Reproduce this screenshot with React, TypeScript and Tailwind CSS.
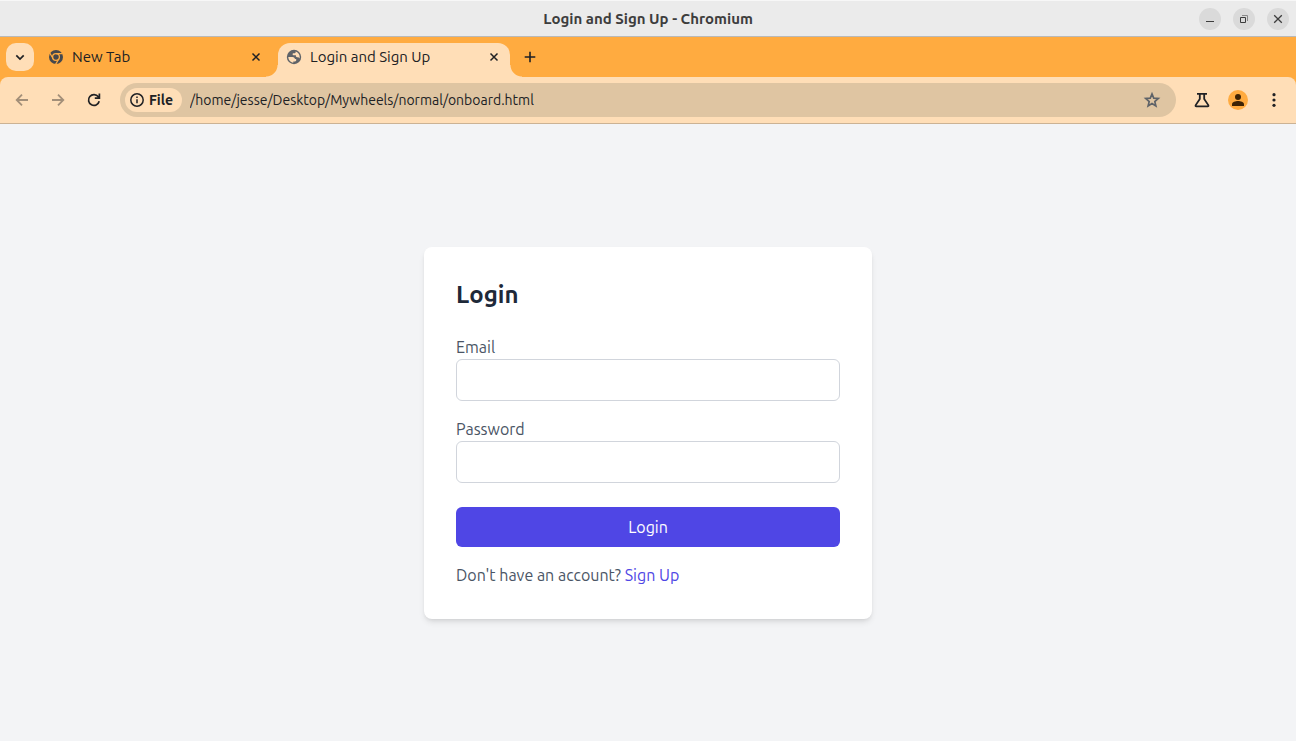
import type { ReactNode } from "react";

function Favicon({ kind }: { kind: "chrome" | "globe" }) {
  if (kind === "chrome") {
    return (
      <svg viewBox="0 0 16 16" className="size-4 shrink-0" aria-hidden="true">
        <circle cx="8" cy="8" r="7" fill="#45484d" />
        <circle cx="8" cy="8" r="3.4" fill="none" stroke="#ffab40" strokeWidth="1.3" />
        <path d="M8 4.6h6.6M5.1 9.7 1.8 4M10.9 9.7 7.6 15.4" stroke="#ffab40" strokeWidth="1.2" />
      </svg>
    );
  }
  return (
    <svg viewBox="0 0 16 16" className="size-4 shrink-0" aria-hidden="true">
      <circle cx="8" cy="8" r="7.2" fill="#5f6368" />
      <path
        d="M2.300 8h4.200c1.500 0 2.400 1 2.400 2.100h1.300v1.200c0 .7-.5 1.200-1.200 1.200H7.300v1.200C4.400 13.400 2.300 11 2.300 8z"
        fill="#ffdeb7"
      />
      <path
        d="M9.600 2.500c2.300.7 4.100 2.800 4.100 5.500 0 .5-.1 1-.2 1.400-.3-.8-.9-1.200-1.700-1.200h-.7c-.7 0-1.200-.5-1.200-1.200V6.200H7.500c-.6 0-.9-.4-.9-.9 0-.6.400-1 1-1h.9c.7 0 1.100-.5 1.100-1.100z"
        fill="#ffdeb7"
      />
    </svg>
  );
}

function CloseIcon() {
  return (
    <svg viewBox="0 0 16 16" className="size-4" fill="none" stroke="#202124" strokeWidth="1.5" aria-hidden="true">
      <path d="m4.500 4.500 7 7M11.500 4.500l-7 7" />
    </svg>
  );
}

function Tab({ title, kind, active }: { title: string; kind: "chrome" | "globe"; active?: boolean }) {
  const shape = active
    ? "relative rounded-t-xl bg-[#ffdeb7] before:absolute before:bottom-0 before:-left-3 before:size-3 before:bg-[radial-gradient(circle_at_0_0,transparent_11px,#ffdeb7_12px)] after:absolute after:-right-3 after:bottom-0 after:size-3 after:bg-[radial-gradient(circle_at_100%_0,transparent_11px,#ffdeb7_12px)]"
    : "";
  return (
    <div className={`flex h-[34px] w-[232px] items-start px-2 ${shape}`}>
      <button type="button" className="flex h-7 min-w-0 flex-1 items-center gap-2 text-left text-[15px] text-[#202124]">
        <Favicon kind={kind} />
        <span className="truncate">{title}</span>
      </button>
      <button type="button" aria-label={`Close ${title}`} className="flex h-7 w-4 items-center justify-center">
        <CloseIcon />
      </button>
    </div>
  );
}

function WindowButton({ label, children }: { label: string; children: ReactNode }) {
  return (
    <button type="button" aria-label={label} className="flex size-[22px] items-center justify-center rounded-full bg-[#dadada]">
      <svg viewBox="0 0 16 16" className="size-4" fill="none" stroke="#3d3d3d" aria-hidden="true">
        {children}
      </svg>
    </button>
  );
}

function ToolButton({ label, children }: { label: string; children: ReactNode }) {
  return (
    <button type="button" aria-label={label} className="flex size-7 shrink-0 items-center justify-center">
      <svg viewBox="0 0 20 20" className="size-5" fill="none" aria-hidden="true">
        {children}
      </svg>
    </button>
  );
}

function Field({ id, label, type }: { id: string; label: string; type: string }) {
  return (
    <div>
      <label htmlFor={id} className="block text-gray-600">
        {label}
      </label>
      <input
        id={id}
        type={type}
        className="block h-[42px] w-full rounded-md border border-gray-300 bg-white px-4 outline-none focus:border-indigo-600"
      />
    </div>
  );
}

export default function App() {
  return (
    <div className="flex min-h-screen flex-col bg-[#f3f4f6] font-['Ubuntu','Noto_Sans',sans-serif]">
      <header>
        <div className="grid h-[37px] grid-cols-[1fr_auto_1fr] items-center border-t border-b border-t-[#f7f7f7] border-b-[#b9b9b9] bg-[#ebebeb] px-[7px]">
          <span />
          <h1 className="text-[15px] leading-5 font-bold text-[#3d3d3d]">Login and Sign Up - Chromium</h1>
          <div className="flex justify-end gap-3">
            <WindowButton label="Minimize">
              <path d="M4 10.500h8" />
            </WindowButton>
            <WindowButton label="Restore">
              <path d="M4.500 6.500h5v5h-5z" />
              <path d="M6 4.500h5.500V10" stroke="#8a8a8a" />
            </WindowButton>
            <WindowButton label="Close window">
              <path d="m4.200 4.200 7.600 7.600M11.800 4.200l-7.600 7.600" strokeWidth="1.300" />
            </WindowButton>
          </div>
        </div>

        <div className="bg-[#ffab40]">
          <nav aria-label="Tabs" className="flex h-10 gap-[6px] px-[6px] pt-[6px]">
            <button type="button" aria-label="Search tabs" className="flex size-7 items-center justify-center rounded-[10px] bg-[#ffdeb7]">
              <svg viewBox="0 0 16 16" className="size-4" fill="none" stroke="#202124" strokeWidth="1.700" aria-hidden="true">
                <path d="m4.300 6.300 3.700 3.700 3.700-3.700" />
              </svg>
            </button>
            <Tab title="New Tab" kind="chrome" />
            <Tab title="Login and Sign Up" kind="globe" active />
            <button type="button" aria-label="New tab" className="flex size-7 items-center justify-center">
              <svg viewBox="0 0 16 16" className="size-4" fill="none" stroke="#202124" strokeWidth="1.600" aria-hidden="true">
                <path d="M8 2.700v10.600M2.700 8h10.600" />
              </svg>
            </button>
          </nav>

          <div className="flex h-[47px] items-center gap-3 rounded-t-lg border-b border-[#cbb294] bg-[#ffdeb7] px-2">
            <div className="flex gap-2">
              <ToolButton label="Back">
                <path d="M16 10H5M10 4.700 4.700 10l5.300 5.300" stroke="#a38f79" strokeWidth="1.800" />
              </ToolButton>
              <ToolButton label="Forward">
                <path d="M4 10h11M10 4.700l5.300 5.300-5.300 5.300" stroke="#a38f79" strokeWidth="1.800" />
              </ToolButton>
              <ToolButton label="Reload">
                <path d="M15.200 11.300A5.400 5.400 0 1 1 14.300 6.800l.9 1.200M15.400 3.600V8.200H10.800" stroke="#202124" strokeWidth="1.700" />
              </ToolButton>
            </div>
            <div className="flex h-[34px] min-w-0 flex-1 items-center gap-2 rounded-full bg-[#dfc5a2] pr-3 pl-[5px] text-sm text-[#202124]">
              <button type="button" className="flex h-6 items-center gap-1 rounded-full bg-[#ffdeb7] pr-[9px] pl-1 font-bold">
                <svg viewBox="0 0 16 16" className="size-4" fill="none" stroke="#202124" strokeWidth="1.500" aria-hidden="true">
                  <circle cx="8" cy="8" r="6.200" />
                  <path d="M8 7.200v4M8 4.600v1.500" />
                </svg>
                File
              </button>
              <input
                aria-label="Address"
                defaultValue="/home/jesse/Desktop/Mywheels/normal/onboard.html"
                className="min-w-0 flex-1 bg-transparent outline-none"
              />
              <button type="button" aria-label="Bookmark this page" className="flex size-6 items-center justify-center">
                <svg viewBox="0 0 24 24" className="size-[18px]" fill="none" stroke="#5f6368" strokeWidth="2.200" aria-hidden="true">
                  <path d="m12 3.800 2.300 5.700 6.100.5-4.700 4 1.500 6-5.200-3.300L6.800 20l1.500-6-4.700-4 6.100-.5z" />
                </svg>
              </button>
            </div>
            <div className="flex gap-2">
              <ToolButton label="Labs">
                <path d="M5 3.800h10M7.800 4v5l-4.100 6.100c-.4.700-.1 1.200.6 1.200h11.400c.7 0 1-.5.6-1.200L12.200 9V4" stroke="#202124" strokeWidth="1.800" />
              </ToolButton>
              <ToolButton label="Profile">
                <circle cx="10" cy="10" r="10" fill="#ffab40" />
                <circle cx="10" cy="7" r="3" fill="#3e2304" />
                <path d="M4 16v-1.800C4 12 7.500 11 10 11s6 1 6 3.200V16z" fill="#3e2304" />
              </ToolButton>
              <ToolButton label="Menu">
                <g fill="#202124">
                  <circle cx="10" cy="4.700" r="1.600" />
                  <circle cx="10" cy="10" r="1.600" />
                  <circle cx="10" cy="15.300" r="1.600" />
                </g>
              </ToolButton>
            </div>
          </div>
        </div>
      </header>

      <main className="flex flex-1 items-center justify-center">
        <form
          onSubmit={(event) => event.preventDefault()}
          className="w-full max-w-md rounded-lg bg-white p-8 text-base shadow-md"
        >
          <h2 className="mb-6 text-2xl font-bold text-gray-800">Login</h2>
          <div className="flex flex-col gap-4">
            <Field id="email" label="Email" type="email" />
            <Field id="password" label="Password" type="password" />
          </div>
          <button type="submit" className="mt-6 block h-10 w-full rounded-md bg-[#4f46e5] text-white">
            Login
          </button>
          <p className="mt-4 text-gray-600">
            Don't have an account?{" "}
            <a href="#signup" className="text-[#4f46e5]">
              Sign Up
            </a>
          </p>
        </form>
      </main>
    </div>
  );
}
